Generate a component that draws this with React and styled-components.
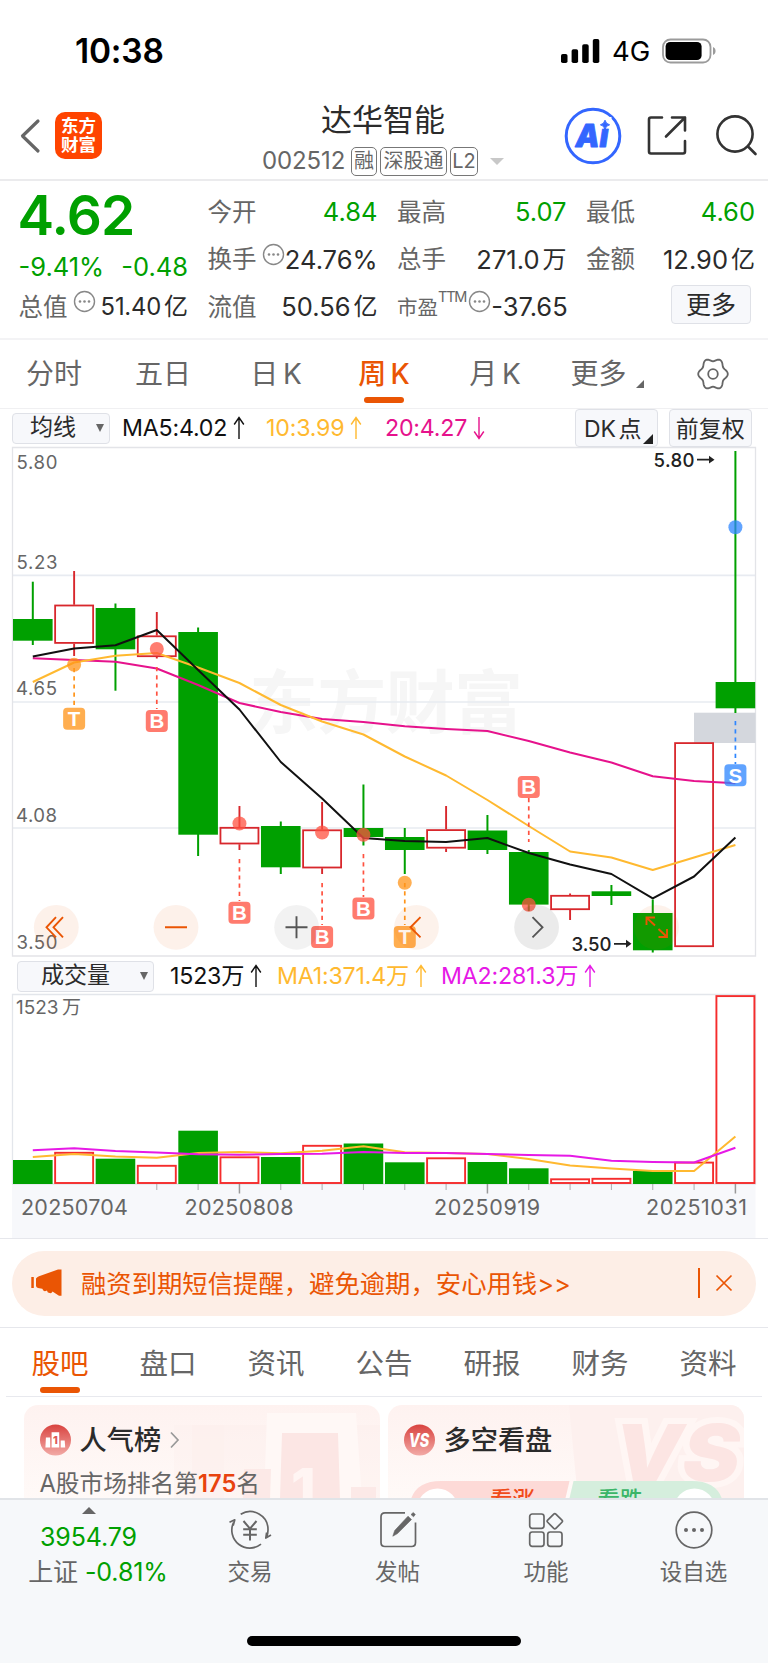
import React from "react";
import styled, { createGlobalStyle, css } from "styled-components";

const palette = {
    green: "#00a000",
    red: "#d8272c",
    volRed: "#f52c2c",
    orange: "#ea5504",
    yellow: "#ffb930",
    pink: "#e6128c",
    magenta: "#e619e6",
    text: "#2b2b2b",
    gray: "#666666",
    line: "#ebebed",
    panel: "#f7f8fb",
};

const numFont = `Inter, "Noto Sans CJK SC", sans-serif`;

const FIRST_X = 32.8;
const STEP = 41.33;
const BODY = 39.6;
const cx = (i) => FIRST_X + STEP * i;

// [상승 여부, 고가, 몸통 위, 몸통 아래, 저가]
const CANDLES = [
    [0, 581.7, 619, 640.7, 645],
    [1, 571, 604.7, 643.7, 656],
    [0, 603.5, 608, 649.3, 690.7],
    [1, 612, 635.5, 657, 658.5],
    [0, 627.5, 632, 834.7, 856],
    [1, 806, 827, 844.3, 850],
    [0, 821.5, 826, 867.3, 874],
    [1, 802, 829.5, 868.3, 874],
    [0, 784.5, 828, 837, 845.5],
    [0, 828, 837, 850, 874],
    [1, 806, 829.3, 848.5, 852],
    [0, 815, 830.5, 850, 854],
    [0, 850, 852, 904.6, 911],
    [1, 893.5, 895, 910, 920],
    [0, 885, 891.3, 896, 905],
    [0, 899.5, 913, 950.3, 952.5],
    [1, 742.3, 742.3, 947, 947],
    [0, 451, 682, 708.3, 713],
];

const MA5 = [656.5, 648.5, 645.3, 630, 670, 709.5, 762, 798.5, 838, 841, 842, 838, 853, 864.5, 874, 898.3, 876.5, 837.5];
const MA10 = [682, 662.5, 655.7, 653, 667.5, 683, 705, 721.5, 734.5, 756.5, 775.5, 800, 826, 851.5, 857.5, 870, 857.5, 845];
const MA20 = [658.3, 660, 661.7, 668.5, 685, 703, 712, 719, 722, 726.3, 729, 731, 741, 752.5, 762.5, 776.3, 781, 783.3];

const VOLUMES = [
    [0, 1160], [1, 1152], [0, 1158.7], [1, 1165], [0, 1130.7], [1, 1156.5],
    [0, 1157], [1, 1145], [0, 1143.5], [0, 1162.3], [1, 1157.5], [0, 1162],
    [0, 1168.3], [1, 1178.5], [1, 1178], [0, 1171], [1, 1161.8], [1, 995.3],
];
const VMA1 = [1157, 1154, 1156.5, 1157.7, 1153, 1152, 1153.3, 1150.7, 1146.3, 1152.3, 1153, 1154, 1159, 1165.5, 1168.5, 1171, 1171, 1136.5];
const VMA2 = [1150.3, 1148.3, 1151, 1152.5, 1154.3, 1154.7, 1154, 1153.7, 1152, 1153, 1153, 1154, 1155, 1155.7, 1160.7, 1162, 1162.5, 1147.7];

// 매매 신호: 점, 점선, 배지
const SIGNALS = [
    { i: 1, t: "T", c: "#ff9419", dot: 664.7, from: 668, to: 707, y: 718.7 },
    { i: 3, t: "B", c: "#ff5240", dot: 649, from: 667, to: 709, y: 721 },
    { i: 5, t: "B", c: "#ff5240", dot: 823.5, from: 859, to: 901, y: 912.8 },
    { i: 7, t: "B", c: "#ff5240", dot: 832.5, from: 883, to: 925, y: 937 },
    { i: 8, t: "B", c: "#ff5240", dot: 834.7, from: 854, to: 897, y: 908.6 },
    { i: 9, t: "T", c: "#ff9419", dot: 882.7, from: 883, to: 925, y: 937 },
    { i: 12, t: "B", c: "#ff5240", dot: 904.7, from: 798, to: 842, y: 787 },
    { i: 17, t: "S", c: "#2e86ff", dot: 527.3, from: 721, to: 764, y: 775.3 },
];

const toPoints = (arr) => arr.map((y, i) => `${cx(i)},${y}`).join(" ");

const gearPath = Array.from({ length: 73 }, (_, k) => {
    const a = (k * Math.PI) / 36;
    const r = 13.3 + 1.5 * Math.cos(6 * a);
    return `${k ? "L" : "M"}${(16 + r * Math.cos(a)).toFixed(2)} ${(16 + r * 1.08 * Math.sin(a)).toFixed(2)}`;
}).join("") + "Z";

const Arrow = ({ down }) => (
    <ArrowSvg width="12" height="24" viewBox="0 0 12 24" $down={down}>
        <path d="M6 23V1.5M1.2 8.5L6 1.5L10.8 8.5" fill="none" stroke="currentColor" strokeWidth="1.4" />
    </ArrowSvg>
);

const Dots = () => (
    <DotsSvg width="23" height="23" viewBox="0 0 23 23">
        <circle cx="11.5" cy="11.5" r="10" fill="none" stroke="#888" strokeWidth="1.4" />
        <circle cx="7" cy="11.5" r="1.3" fill="#888" />
        <circle cx="11.5" cy="11.5" r="1.3" fill="#888" />
        <circle cx="16" cy="11.5" r="1.3" fill="#888" />
    </DotsSvg>
);

function StatusBar() {
    return (
        <Status>
            <Clock>10:38</Clock>
            <StatusRight>
                <svg width="39" height="26" viewBox="0 0 39 26">
                    <rect x="0" y="16" width="6.5" height="9" rx="1.8" />
                    <rect x="10.6" y="11.3" width="6.5" height="13.7" rx="1.8" />
                    <rect x="21.2" y="6.2" width="6.5" height="18.8" rx="1.8" />
                    <rect x="31.8" y="1" width="6.5" height="24" rx="1.8" />
                </svg>
                <Network>4G</Network>
                <svg width="54" height="26" viewBox="0 0 54 26">
                    <rect x="1" y="1.5" width="47.5" height="23" rx="7.5" fill="none" stroke="#9b9b9b" strokeWidth="1.8" />
                    <rect x="3.6" y="4" width="36" height="18" rx="4.6" />
                    <path d="M51 9C54.4 10.2 54.4 15.8 51 17Z" fill="#9b9b9b" />
                </svg>
            </StatusRight>
        </Status>
    );
}

function Header() {
    return (
        <Head>
            <HeadLeft>
                <svg width="22" height="36" viewBox="0 0 22 36">
                    <path d="M19 3L3.5 18L19 33" fill="none" stroke="#666" strokeWidth="3.2" strokeLinecap="round" strokeLinejoin="round" />
                </svg>
                <Logo>东方<br />财富</Logo>
            </HeadLeft>
            <HeadCenter>
                <Title>达华智能</Title>
                <SubTitle>
                    <Code>002512</Code>
                    <Tag $w="26px">融</Tag>
                    <Tag $w="67px">深股通</Tag>
                    <Tag $w="28px">L2</Tag>
                    <Caret />
                </SubTitle>
            </HeadCenter>
            <HeadRight>
                <svg width="58" height="58" viewBox="0 0 58 58">
                    <circle cx="29" cy="29" r="26.8" fill="none" stroke="#3366ff" strokeWidth="3" />
                    <text x="11.5" y="39.5" fontFamily="Inter, sans-serif" fontWeight="900" fontStyle="italic" fontSize="32" textLength="33" lengthAdjust="spacingAndGlyphs" fill="#3366ff" stroke="#3366ff" strokeWidth="0.8" strokeLinejoin="round">Ai</text>
                    <rect x="35.5" y="10" width="12" height="11.3" fill="#fff" />
                    <path d="M41 13.2Q41.8 17 45.6 17.8Q41.8 18.6 41 22.4Q40.2 18.6 36.4 17.8Q40.2 17 41 13.2Z" fill="#3366ff" stroke="#3366ff" />
                </svg>
                <svg width="42" height="42" viewBox="0 0 42 42" fill="none" stroke="#333" strokeWidth="2.6" strokeLinecap="round" strokeLinejoin="round">
                    <path d="M15 2.5H4Q2 2.5 2 4.5V36.5Q2 38.5 4 38.5H36Q38 38.5 38 36.5V26" />
                    <path d="M25 2.5H38V15.5M38 2.5L19 21.5" />
                </svg>
                <svg width="42" height="42" viewBox="0 0 42 42" fill="none" stroke="#333" strokeWidth="2.6" strokeLinecap="round">
                    <circle cx="19" cy="19" r="17.6" />
                    <path d="M32 31.5L39.5 39" />
                </svg>
            </HeadRight>
        </Head>
    );
}

function Quote() {
    return (
        <QuoteGrid>
            <div>
                <Price>4.62</Price>
                <QuoteRow $h="34px">
                    <Value $green>-9.41%</Value>
                    <Value $green>-0.48</Value>
                </QuoteRow>
                <QuoteRow>
                    <Label>总值<Dots /></Label>
                    <Value $size="23.8px">51.40<Unit>亿</Unit></Value>
                </QuoteRow>
            </div>
            <QuoteCol>
                <QuoteRow><Label>今开</Label><Value $green>4.84</Value></QuoteRow>
                <QuoteRow><Label>换手<Dots /></Label><Value>24.76%</Value></QuoteRow>
                <QuoteRow><Label>流值</Label><Value>50.56<Unit>亿</Unit></Value></QuoteRow>
            </QuoteCol>
            <QuoteCol>
                <QuoteRow><Label>最高</Label><Value $green>5.07</Value></QuoteRow>
                <QuoteRow><Label>总手</Label><Value>271.0<Unit>万</Unit></Value></QuoteRow>
                <QuoteRow><Label><SmallLabel>市盈</SmallLabel><Ttm>TTM</Ttm><Dots /></Label><Value>-37.65</Value></QuoteRow>
            </QuoteCol>
            <QuoteCol>
                <QuoteRow><Label>最低</Label><Value $green>4.60</Value></QuoteRow>
                <QuoteRow><Label>金额</Label><Value>12.90<Unit>亿</Unit></Value></QuoteRow>
                <QuoteRow><span /><MoreButton>更多</MoreButton></QuoteRow>
            </QuoteCol>
        </QuoteGrid>
    );
}

const PERIODS = ["分时", "五日", "日 K", "周 K", "月 K"];

function PeriodTabs() {
    return (
        <Periods>
            {PERIODS.map((p, i) => (
                <Tab key={p} $active={i === 3}>{p}</Tab>
            ))}
            <Tab>
                更多
                <MoreMark viewBox="0 0 9 9"><path d="M9 0V9H0Z" fill="#666" /></MoreMark>
            </Tab>
            <Tab>
                <svg width="32" height="32" viewBox="0 0 32 32" fill="none" stroke="#666" strokeWidth="1.8">
                    <path d={gearPath} strokeLinejoin="round" />
                    <circle cx="16" cy="16" r="4.8" />
                </svg>
            </Tab>
        </Periods>
    );
}

function Signal({ s }) {
    const x = cx(s.i);
    return (
        <g>
            <circle cx={x} cy={s.dot} r="7" fill={s.c} opacity="0.75" />
            <line x1={x} x2={x} y1={s.from} y2={s.to} stroke={s.c} strokeWidth="1.7" strokeDasharray="4.2 4" />
            <rect x={x - 11} y={s.y - 11} width="22" height="22" rx="4" fill={s.c} opacity="0.76" />
            <text x={x} y={s.y + 7.2} textAnchor="middle" fontSize="20.5" fontWeight="600" fill="#fff">{s.t}</text>
        </g>
    );
}

function KChart() {
    return (
        <ChartSvg width="768" height="512" viewBox="0 446 768 512">
            <g fontFamily={`"Noto Sans CJK SC", sans-serif`}>
                <text x="249" y="728" fontSize="69" fontWeight="700" fill="#f6f6f6" textLength="274">东方财富</text>
            </g>
            <g stroke="#e8ebf1" strokeWidth="1.6">
                <path d="M12 575.4H755M12 702H755M12 828H755" />
            </g>
            <path d="M12.5 447.5H755.5V956H12.5Z" fill="none" stroke="#e3e4e8" strokeWidth="1.3" />
            <rect x="694" y="712.7" width="61.5" height="30.3" fill="#d4d7dd" />
            {CANDLES.map(([up, high, top, bottom, low], i) => (
                <g key={i}>
                    {up ? (
                        <g stroke={palette.red} fill="none">
                            <path d={`M${cx(i)} ${high}V${top}M${cx(i)} ${bottom}V${low}`} strokeWidth="1.9" />
                            <rect x={cx(i) - 19} y={top + 0.8} width="38" height={bottom - top - 1.6} strokeWidth="1.8" fill={i === 16 ? "#fff" : "none"} />
                        </g>
                    ) : (
                        <g fill={palette.green}>
                            <rect x={cx(i) - 1} y={high} width="2" height={low - high} />
                            <rect x={cx(i) - BODY / 2} y={top} width={BODY} height={bottom - top} />
                        </g>
                    )}
                </g>
            ))}
            <g fill="none" strokeWidth="2" strokeLinejoin="round">
                <polyline points={toPoints(MA20)} stroke={palette.pink} />
                <polyline points={toPoints(MA10)} stroke={palette.yellow} />
                <polyline points={toPoints(MA5)} stroke="#111" />
            </g>
            <g fontFamily={numFont} fontSize="18.6" fill="#666">
                <text x="16.5" y="469.2" textLength="41">5.80</text>
                <text x="16.5" y="568.6" textLength="41">5.23</text>
                <text x="16" y="695.2" textLength="41">4.65</text>
                <text x="16" y="822.2" textLength="41">4.08</text>
                <text x="16.5" y="948.7" textLength="41">3.50</text>
            </g>
            <g fontFamily={numFont} fontSize="18.6" fontWeight="500" fill="#222">
                <text x="653.5" y="466.7" textLength="41">5.80</text>
                <text x="571.5" y="950.8" textLength="40">3.50</text>
                <path d="M697 458.8H709V455.8L714.5 459.7L709 463.6V460.6H697ZM614 943H626V939.8L631.5 943.8L626 947.8V944.8H614Z" />
            </g>
            <g fontFamily={`"Liberation Sans", sans-serif`}>
                {SIGNALS.map((s) => <Signal key={s.i} s={s} />)}
            </g>
            {/* 차트 조작 버튼 */}
            <g fill={palette.orange} opacity="0.08">
                <circle cx="56.3" cy="927.3" r="22.4" />
                <circle cx="176" cy="927.3" r="22.4" />
                <circle cx="416.5" cy="927.3" r="22.4" />
                <circle cx="656.5" cy="927.3" r="22.4" />
            </g>
            <circle cx="296.6" cy="927.3" r="22.4" opacity="0.05" />
            <circle cx="536.6" cy="927.3" r="22.4" opacity="0.08" />
            <g fill="none" stroke={palette.orange} strokeWidth="1.9">
                <path d="M56 917.2L46.5 927.3L56 937.4M63 917.2L53.5 927.3L63 937.4M165 927.3H187M420.5 917.2L410.5 927.3L420.5 937.4" />
                <path d="M646.5 925V917.5H655M647 918L655 925.5M667 929V937H658.5M666.5 936.5L658.5 929" />
            </g>
            <path d="M285.5 927.3H307.5M296.5 916.3V938.3M532.5 917.2L542.5 927.3L532.5 937.4" fill="none" stroke="#555" strokeWidth="1.9" />
        </ChartSvg>
    );
}

function VolumeChart() {
    return (
        <ChartSvg width="768" height="246" viewBox="0 992 768 246">
            <rect x="12" y="1184" width="743.5" height="54" fill={palette.panel} />
            <path d="M12.5 1184V994.5H755.5V1184Z" fill="none" stroke="#e3e6eb" strokeWidth="1.3" />
            {VOLUMES.map(([up, y], i) =>
                up ? (
                    <rect key={i} x={cx(i) - 19} y={y + 0.8} width="38" height={1183 - y - 0.8} fill="#fff" stroke={palette.volRed} strokeWidth="1.9" />
                ) : (
                    <rect key={i} x={cx(i) - BODY / 2} y={y} width={BODY} height={1184 - y} fill={palette.green} />
                )
            )}
            {VOLUMES.map((_, i) =>
                i < 3 ? null : (
                    <path key={i} d={`M${cx(i)} 1184V${[5, 11, 17].includes(i) ? 1193.5 : 1190}`} stroke="#999" strokeWidth={[5, 11, 17].includes(i) ? 1.5 : 0.8} />
                )
            )}
            <g fill="none" strokeWidth="2" strokeLinejoin="round">
                <polyline points={toPoints(VMA1)} stroke={palette.yellow} />
                <polyline points={toPoints(VMA2)} stroke={palette.magenta} />
            </g>
            <g fontFamily={numFont} fill="#666">
                <text x="16" y="1014.3" fontSize="19">1523<tspan dx="3.5">万</tspan></text>
                <g fontSize="21.5">
                    <text x="21" y="1215" textLength="107">20250704</text>
                    <text x="184.5" y="1215" textLength="109">20250808</text>
                    <text x="434" y="1215" textLength="106">20250919</text>
                    <text x="646" y="1215" textLength="101">20251031</text>
                </g>
            </g>
        </ChartSvg>
    );
}

function Banner() {
    return (
        <BannerWrap>
            <BannerBox>
                <svg width="32" height="28" viewBox="0 0 32 28" fill={palette.orange}>
                    <path d="M0.3 8H2.8V19H0.3ZM5 9.5Q6 8 8 7.3L27 0.5H30.5V26.8H28L21.5 22.5Q20.5 25 17.8 23.7Q16.5 23.8 16 21.5Q12.5 23.5 11.3 19.8L7 19Q5.3 18.7 5 17Z" />
                </svg>
                <BannerText>融资到期短信提醒，避免逾期，安心用钱&gt;&gt;</BannerText>
                <BannerLine />
                <svg width="18" height="18" viewBox="0 0 18 18">
                    <path d="M1.5 1.5L16.5 16.5M16.5 1.5L1.5 16.5" stroke={palette.orange} strokeWidth="1.7" />
                </svg>
            </BannerBox>
        </BannerWrap>
    );
}

const NEWS_TABS = ["股吧", "盘口", "资讯", "公告", "研报", "财务", "资料"];

function Cards() {
    return (
        <CardRow>
            <Card>
                <Backdrop width="356" height="94" viewBox="0 0 356 94">
                    <path d="M200 0V94H150V20H200Z" fill="#fdf0ee" opacity=".4" />
                    <path d="M168 20H356V94H168Z" fill="#fdeeec" opacity=".4" />
                    <path d="M243 8H332L338 94H240Z" fill="#fff8f6" />
                    <path d="M258 28H314L316 94H256Z" fill="#fce6e4" />
                    <path d="M220 64H247L246 94H219Z" fill="#fce9e7" />
                    <path d="M327 82H352V94H327Z" fill="#fce9e7" />
                    <text x="267" y="104" fontFamily="Inter, sans-serif" fontSize="56" fontWeight="800" fill="#fff5f3">1</text>
                </Backdrop>
                <CardTitle>
                    <svg width="31" height="32" viewBox="0 0 31 32">
                        <circle cx="15.5" cy="16" r="15.5" fill="url(#badge)" />
                        <path d="M11.6 8.3H19.2V23.5H11.6ZM5.9 13.6H10.2V23.5H5.4ZM20.7 16.5H24.7L25.2 23.5H20.7Z" fill="#fff" />
                        <text x="12.9" y="20" fontFamily="Inter, sans-serif" fontSize="11" fontWeight="800" fill="#dd5a55">1</text>
                    </svg>
                    <span>人气榜</span>
                    <svg width="10" height="18" viewBox="0 0 10 18">
                        <path d="M1 1.5L8 9L1 16.5" fill="none" stroke="#999" strokeWidth="1.7" />
                    </svg>
                </CardTitle>
                <Rank>A股市场排名第<b>175</b>名</Rank>
            </Card>
            <Card>
                <Backdrop width="356" height="94" viewBox="0 0 356 94">
                    <path d="M181 0H356V94H190Z" fill="#fdf0ee" />
                    <text x="226" y="76" fontFamily="Inter, sans-serif" fontSize="78" fontWeight="900" fontStyle="italic" fill="#fce5e3" stroke="#fff6f4" strokeWidth="12" paintOrder="stroke" textLength="126" lengthAdjust="spacingAndGlyphs">VS</text>
                </Backdrop>
                <CardTitle>
                    <svg width="31" height="32" viewBox="0 0 31 32">
                        <defs>
                            <linearGradient id="badge" x1="0" y1="0" x2="0" y2="1">
                                <stop offset="0" stopColor="#d9433f" />
                                <stop offset="1" stopColor="#f2aaa6" />
                            </linearGradient>
                        </defs>
                        <circle cx="15.5" cy="16" r="15.5" fill="url(#badge)" />
                        <text x="4.8" y="22.6" fontFamily="Inter, sans-serif" fontSize="19" fontWeight="800" fontStyle="italic" textLength="20.5" lengthAdjust="spacingAndGlyphs" fill="#fff">VS</text>
                    </svg>
                    <span>多空看盘</span>
                </CardTitle>
                <VoteSvg width="316" height="18" viewBox="409 1480 316 18">
                    <path d="M409 1513Q409 1481 441 1481H569.5L562 1513Z" fill="#fddad7" />
                    <path d="M573.5 1481H692Q724 1481 724 1513H566Z" fill="#d5eedd" />
                    <circle cx="437.5" cy="1509" r="20.5" fill="#fff" />
                    <circle cx="694.5" cy="1509" r="20.5" fill="#fff" />
                    <g fontFamily={`"Noto Sans CJK SC", sans-serif`} fontSize="22.5" fontWeight="500">
                        <text x="490" y="1508" fill="#f04b1a">看涨</text>
                        <text x="597.5" y="1508" fill="#3bb568">看跌</text>
                    </g>
                </VoteSvg>
            </Card>
        </CardRow>
    );
}

function BottomBar() {
    return (
        <Bottom>
            <IndexCell>
                <UpMark />
                <IndexValue>3954.79</IndexValue>
                <IndexName>上证 <em>-0.81%</em></IndexName>
            </IndexCell>
            <NavCell>
                <NavIcon viewBox="0 0 44 40">
                    <path d="M12.7 4.2A18 18 0 0 1 40 20Q40 24 38.5 27M33 34.2A18 18 0 0 1 5.5 12.5M1.5 12.3L6.8 9.8L5.2 15.5M43 25L37.8 28L38.6 22.5" />
                    <path d="M15.5 11L22 18.7L28.5 11M22 18.7V30.5M15.2 19.3H28.8M15.2 24.8H28.8" strokeWidth="2" />
                </NavIcon>
                <span>交易</span>
            </NavCell>
            <NavCell>
                <NavIcon viewBox="0 0 44 40">
                    <path d="M29 2.8H9Q5 2.8 5 6.8V32.5Q5 36.5 9 36.5H35.5Q39.5 36.5 39.5 32.5V12.5" />
                    <path d="M32 6.2L35.5 9.5L21.5 23.6L16.8 26.2L18.7 20.5ZM35 4.5L37.3 2.5L39.3 4.5L37.5 6.8Z" fill="#666" strokeWidth="0.6" />
                </NavIcon>
                <span>发帖</span>
            </NavCell>
            <NavCell>
                <NavIcon viewBox="0 0 44 40">
                    <rect x="5.7" y="4" width="14.3" height="14.3" rx="2.5" />
                    <rect x="5.7" y="22" width="14.3" height="14.3" rx="2.5" />
                    <rect x="23.7" y="22" width="14.3" height="14.3" rx="2.5" />
                    <rect x="-5.8" y="-5.8" width="11.6" height="11.6" rx="1.5" transform="translate(30.8 11.2) rotate(45)" />
                </NavIcon>
                <span>功能</span>
            </NavCell>
            <NavCell>
                <NavIcon viewBox="0 0 44 40">
                    <circle cx="22" cy="20" r="17.8" />
                    <g fill="#666" stroke="none">
                        <circle cx="14" cy="20" r="2" />
                        <circle cx="22" cy="20" r="2" />
                        <circle cx="30" cy="20" r="2" />
                    </g>
                </NavIcon>
                <span>设自选</span>
            </NavCell>
            <HomeLine />
        </Bottom>
    );
}

function App() {
    return (
        <Page>
            <Global />
            <StatusBar />
            <Header />
            <Quote />
            <PeriodTabs />
            <MaBar>
                <Picker $w="98px" $left="17px">均线<Tri /></Picker>
                <Legend $w="144px" $ml="12px">MA5:4.02<Arrow /></Legend>
                <Legend $w="119px" $color={palette.yellow}>10:3.99<Arrow /></Legend>
                <Legend $w="190px" $color={palette.pink}>20:4.27<Arrow down /></Legend>
                <ModeButton $pad="7px">
                    DK 点
                    <Corner />
                </ModeButton>
                <ModeButton>前复权</ModeButton>
            </MaBar>
            <KChart />
            <VolBar>
                <Picker $w="137px" $left="23px">成交量<Tri /></Picker>
                <Legend $w="107px" $ml="16px">1523万<Arrow /></Legend>
                <Legend $w="164px" $color={palette.yellow}>MA1:371.4万<Arrow /></Legend>
                <Legend $w="160px" $color={palette.magenta}>MA2:281.3万<Arrow /></Legend>
            </VolBar>
            <VolumeChart />
            <Banner />
            <NewsTabs>
                {NEWS_TABS.map((t, i) => (
                    <Tab key={t} $active={i === 0}>{t}</Tab>
                ))}
            </NewsTabs>
            <Cards />
            <BottomBar />
        </Page>
    );
}

const Global = createGlobalStyle`
    * {
        box-sizing: border-box;
    }
    body {
        margin: 0;
        background: #fff;
    }
    svg {
        display: block;
        flex-shrink: 0;
    }
`

const Page = styled.div`
    width: 768px;
    height: 1663px;
    overflow: hidden;
    display: flex;
    flex-direction: column;
    background: #fff;
    font-family: ${numFont};
    color: ${palette.text};
    white-space: nowrap;
`

// 상태바
const Status = styled.div`
    display: flex;
    flex-shrink: 0;
    justify-content: space-between;
    align-items: center;
    height: 84px;
    padding: 18px 52px 0 75px;
`

const Clock = styled.span`
    font-size: 33.5px;
    font-weight: 600;
    line-height: 40px;
    letter-spacing: -0.2px;
    color: #000;
`

const StatusRight = styled.div`
    display: flex;
    align-items: center;
`

const Network = styled.span`
    width: 50px;
    margin-left: 12px;
    font-size: 27.5px;
    line-height: 30px;
    color: #000;
`

// 종목 헤더
const Head = styled.header`
    display: grid;
    flex-shrink: 0;
    grid-template-columns: 200px 1fr 204px;
    height: 97px;
    border-bottom: 2px solid ${palette.line};
`

const HeadLeft = styled.div`
    display: flex;
    align-items: center;
    gap: 14px;
    padding: 5px 0 0 19px;
`

const Logo = styled.div`
    width: 47px;
    height: 47px;
    padding-top: 3.5px;
    border-radius: 10px;
    background: #ff4400;
    font-size: 17.5px;
    font-weight: 700;
    line-height: 19.5px;
    text-align: center;
    color: #fff;
`

const HeadCenter = styled.div`
    display: flex;
    flex-direction: column;
    align-items: center;
    padding: 16px 0 0 2px;
`

const Title = styled.h1`
    margin: 0;
    font-size: 31px;
    font-weight: 400;
    line-height: 40px;
`

const SubTitle = styled.div`
    display: flex;
    align-items: center;
    gap: 3px;
    height: 42px;
`

const Code = styled.span`
    width: 86px;
    font-size: 24px;
    line-height: 30px;
    letter-spacing: -0.1px;
    color: ${palette.gray};
`

const Tag = styled.span`
    width: ${(props) => props.$w};
    height: 29px;
    border: 1.4px solid #777;
    border-radius: 5px;
    font-size: 20px;
    line-height: 26px;
    text-align: center;
    color: ${palette.gray};
`

const Caret = styled.i`
    margin-left: 9px;
    border: 7px solid transparent;
    border-top-color: #c8c8c8;
    border-bottom: 0;
`

const HeadRight = styled.div`
    display: flex;
    align-items: center;
    padding: 5px 0 0 0;

    svg:nth-child(2) {
        margin-left: 24.5px;
    }
    svg:nth-child(3) {
        margin-left: 27px;
    }
`

// 시세 요약
const QuoteGrid = styled.section`
    display: grid;
    flex-shrink: 0;
    grid-template-columns: 169.5px 170px 169.5px 169px;
    column-gap: 19.5px;
    height: 159px;
    padding-left: 18.5px;
    border-bottom: 2px solid #f3f3f5;
`

const QuoteCol = styled.div`
    padding-top: 7px;
`

const Price = styled.div`
    height: 68px;
    margin-left: -1px;
    font-size: 55px;
    font-weight: 600;
    line-height: 69px;
    letter-spacing: -0.8px;
    color: ${palette.green};
`

const QuoteRow = styled.div`
    display: flex;
    justify-content: space-between;
    align-items: center;
    height: ${(props) => props.$h || "47.5px"};
`

const Label = styled.span`
    display: flex;
    align-items: center;
    font-size: 24.5px;
    line-height: 30px;
    color: ${palette.gray};
`

const SmallLabel = styled.span`
    padding-top: 3px;
    font-size: 20.5px;
`

const Ttm = styled.span`
    margin-top: -20px;
    font-size: 14.5px;
    line-height: 16px;
    letter-spacing: -1.2px;
`

const Value = styled.span`
    display: flex;
    padding-top: 1px;
    font-size: ${(props) => props.$size || "25.5px"};
    line-height: 30px;
    letter-spacing: ${(props) => (props.$size ? "-0.2px" : "0")};
    color: ${(props) => (props.$green ? palette.green : palette.text)};
`

const Unit = styled.span`
    margin-left: 3px;
    font-size: 24px;
    letter-spacing: 0;
`

const DotsSvg = styled.svg`
    margin: -10px 0 0 5px;

    ${Ttm} + & {
        margin-left: 2px;
    }
`

const buttonBox = css`
    border: 1.5px solid #dfe1e7;
    border-radius: 4px;
    background: ${palette.panel};
`

const MoreButton = styled.div`
    ${buttonBox}
    width: 80px;
    height: 39px;
    margin: -4px 4px 0 0;
    font-size: 25px;
    line-height: 38px;
    text-align: center;
`

const Periods = styled.nav`
    display: grid;
    flex-shrink: 0;
    grid-template-columns: 108px 110px 116px 100px 122px 102px 109px;
    height: 69px;
    border-bottom: 1.5px solid #f0f0f2;
    word-spacing: -3px;
`

const Tab = styled.div`
    display: flex;
    position: relative;
    justify-content: center;
    align-items: center;
    font-size: 28px;
    line-height: 36px;
    color: ${(props) => (props.$active ? palette.orange : palette.gray)};
    font-weight: ${(props) => (props.$active ? 500 : 400)};

    ${(props) => props.$active && css`
        &::after {
            content: "";
            position: absolute;
            bottom: 5px;
            left: calc(50% - 20px);
            width: 40px;
            height: 6px;
            border-radius: 3px;
            background: ${palette.orange};
        }
    `}
`

const MoreMark = styled.svg`
    width: 8px;
    height: 8px;
    margin: 20px 0 0 9px;
`

// 이동평균 줄
const MaBar = styled.div`
    display: flex;
    flex-shrink: 0;
    align-items: center;
    height: 37px;
    padding: 1px 0 0 12px;
`

const VolBar = styled.div`
    display: flex;
    flex-shrink: 0;
    align-items: center;
    height: 34px;
    padding: 2px 0 0 17px;
`

const Picker = styled.div`
    ${buttonBox}
    display: flex;
    justify-content: space-between;
    align-items: center;
    width: ${(props) => props.$w};
    height: 31px;
    padding: 0 5px 0 ${(props) => props.$left};
    font-size: 23px;
    line-height: 26px;
    padding-bottom: 2px;
`

const Tri = styled.i`
    margin-top: 2px;
    border: 4.5px solid transparent;
    border-top: 8px solid #666;
    border-bottom: 0;
`

const Legend = styled.div`
    display: flex;
    align-items: center;
    width: ${(props) => props.$w};
    margin-left: ${(props) => props.$ml || 0};
    font-size: 23.2px;
    line-height: 30px;
    letter-spacing: -0.2px;
    color: ${(props) => props.$color || "#111"};
`

const ArrowSvg = styled.svg`
    margin-left: 6px;
    transform: ${(props) => (props.$down ? "rotate(180deg)" : "none")};
`

const ModeButton = styled.div`
    ${buttonBox}
    display: flex;
    position: relative;
    justify-content: center;
    align-items: center;
    width: 82.5px;
    height: 38px;
    margin: -1px 11.5px 0 0;
    padding: 0 ${(props) => props.$pad || 0} 2px 0;
    font-size: 23px;
    word-spacing: -4px;
`

const Corner = styled.i`
    position: absolute;
    right: 4px;
    bottom: 2px;
    border: 5.5px solid transparent;
    border-right-color: #222;
    border-bottom-color: #222;
`

const ChartSvg = styled.svg`
    flex-shrink: 0;
`

// 알림 배너
const BannerWrap = styled.div`
    flex-shrink: 0;
    height: 90px;
    padding: 11.5px 12px 0;
    border-top: 1.5px solid #e6e7ec;
    border-bottom: 1.5px solid #e6e7ec;
`

const BannerBox = styled.div`
    display: flex;
    align-items: center;
    height: 65px;
    padding: 0 23.5px 0 19px;
    border-radius: 33px;
    background: #fdeee6;
    color: ${palette.orange};
`

const BannerText = styled.span`
    flex: 1;
    margin-left: 18px;
    padding-top: 1px;
    font-size: 25.35px;
    line-height: 32px;
`

const BannerLine = styled.i`
    width: 1.5px;
    height: 30px;
    margin-right: 15px;
    background: ${palette.orange};
`

const NewsTabs = styled.nav`
    display: grid;
    flex-shrink: 0;
    grid-template-columns: repeat(7, 108px);
    height: 69px;
    margin: 0 6px;
    border-bottom: 1.5px solid #e8e9ee;

    ${Tab} {
        padding-top: 3px;
        font-size: 28.5px;
        font-weight: 400;
    }
    ${Tab}::after {
        bottom: 3px;
    }
`

const CardRow = styled.div`
    display: grid;
    flex-shrink: 0;
    grid-template-columns: 356px 356px;
    gap: 8px;
    height: 101px;
    padding: 8px 0 0 24px;
    overflow: hidden;
`

const Card = styled.div`
    position: relative;
    height: 130px;
    padding-left: 16px;
    border-radius: 14px;
    overflow: hidden;
    background: linear-gradient(#fef2f0, #fffaf8 75%);
`

const Backdrop = styled.svg`
    position: absolute;
    top: 0;
    left: 0;
`

const CardTitle = styled.div`
    display: flex;
    position: relative;
    align-items: center;
    height: 70px;
    gap: 8.5px;
    font-size: 27.2px;
    font-weight: 500;
    line-height: 34px;

    span {
        padding-top: 1px;
    }
`

const Rank = styled.div`
    position: relative;
    margin: -3px 0 0 -0.5px;
    font-size: 23.7px;
    line-height: 24px;
    color: ${palette.gray};

    b {
        font-weight: 600;
        color: #e8420e;
    }
`

const VoteSvg = styled.svg`
    position: relative;
    margin: 5px 0 0 5px;
`

// 하단 메뉴
const Bottom = styled.footer`
    display: grid;
    flex: 1;
    grid-template-columns: 177px 146px 149px 148px 147px;
    grid-template-rows: 90px 1fr;
    border-top: 2px solid #e1e4e8;
    background: #f6f8fa;
`

const IndexCell = styled.div`
    display: flex;
    flex-direction: column;
    align-items: center;
    padding: 7px 0 0 19px;
    font-size: 25px;
    line-height: 34px;
    letter-spacing: -0.1px;
`

const UpMark = styled.i`
    margin-right: 19px;
    border: 7px solid transparent;
    border-top: 0;
    border-bottom: 7px solid #666;
`

const IndexValue = styled.span`
    margin: 6px 19px 0 0;
    color: ${palette.green};
`

const IndexName = styled.span`
    margin-top: 1px;
    color: ${palette.gray};

    em {
        font-style: normal;
        color: ${palette.green};
    }
`

const NavCell = styled.div`
    display: flex;
    flex-direction: column;
    align-items: center;
    padding-top: 10px;
    font-size: 22.5px;
    line-height: 30px;
    color: ${palette.gray};

    span {
        margin-top: 7px;
    }
`

const NavIcon = styled.svg`
    width: 44px;
    height: 40px;
    fill: none;
    stroke: #666;
    stroke-width: 1.7;
    stroke-linejoin: round;
`

const HomeLine = styled.div`
    grid-column: 1 / -1;
    justify-self: center;
    width: 274px;
    height: 10px;
    margin-top: 46px;
    border-radius: 5px;
    background: #000;
`

export default App;
